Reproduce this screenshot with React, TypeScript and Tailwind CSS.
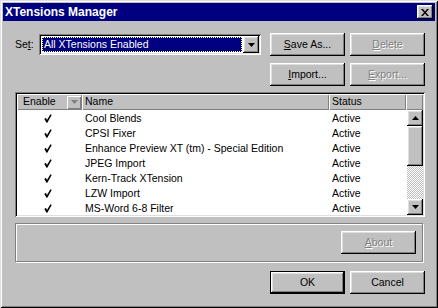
import React from "react";

const raised =
  "shadow-[inset_-1px_-1px_#000,inset_1px_1px_#fff,inset_-2px_-2px_#808080,inset_2px_2px_#dfdfdf]";
const flat = "shadow-[inset_1px_1px_#fff,inset_-1px_-1px_#808080]";
const sunken =
  "shadow-[inset_1px_1px_#808080,inset_-1px_-1px_#fff,inset_2px_2px_#000,inset_-2px_-2px_#dfdfdf]";
const disabledText = "text-[#808080] [text-shadow:1px_1px_0_#fff]";

const rows = [
  "Cool Blends",
  "CPSI Fixer",
  "Enhance Preview XT (tm) - Special Edition",
  "JPEG Import",
  "Kern-Track XTension",
  "LZW Import",
  "MS-Word 6-8 Filter",
];

function Btn({
  children,
  disabled,
  isDefault,
  className = "",
}: {
  children: React.ReactNode;
  disabled?: boolean;
  isDefault?: boolean;
  className?: string;
}) {
  // default button gets the extra black frame
  if (isDefault) {
    return (
      <div className={`w-[75px] h-[23px] border border-black ${className}`}>
        <div
          className={`w-full h-full flex items-center justify-center bg-[#c0c0c0] ${raised}`}
        >
          {children}
        </div>
      </div>
    );
  }
  return (
    <div
      className={`w-[75px] h-[23px] flex items-center justify-center bg-[#c0c0c0] ${raised} ${
        disabled ? disabledText : "text-black"
      } ${className}`}
    >
      {children}
    </div>
  );
}

function Arrow({ up, gray }: { up?: boolean; gray?: boolean }) {
  return (
    <svg width="7" height="4" viewBox="0 0 7 4">
      <path
        d={up ? "M3.5 0 L7 4 L0 4 Z" : "M0 0 L7 0 L3.5 4 Z"}
        fill={gray ? "#808080" : "#000"}
      />
    </svg>
  );
}

function Check() {
  return (
    <svg width="8" height="9" viewBox="0 0 8 9">
      <path
        d="M0.3 5 L1.9 3.8 L3 6 L6.4 0.3 L7.7 1 L3.3 8.7 L2.5 8.7 Z"
        fill="#000"
      />
    </svg>
  );
}

export default function App() {
  return (
    <div
      className="w-[438px] h-[308px] bg-[#c0c0c0] p-[3px] flex flex-col shadow-[inset_1px_1px_#dfdfdf,inset_-1px_-1px_#000,inset_2px_2px_#fff,inset_-2px_-2px_#808080] text-[10.5px] text-black"
      style={{ fontFamily: '"Liberation Sans", Arial, sans-serif' }}
    >
      {/* title bar */}
      <div className="h-[18px] bg-[#000080] flex items-center justify-between pl-[2px] pr-[2px]">
        <span className="text-white font-bold text-[12px] leading-none">
          XTensions Manager
        </span>
        <div
          className={`w-[16px] h-[14px] bg-[#c0c0c0] flex items-center justify-center ${raised}`}
        >
          <svg width="8" height="7" viewBox="0 0 8 7">
            <path
              d="M0 0 L2 0 L4 2.5 L6 0 L8 0 L5 3.5 L8 7 L6 7 L4 4.5 L2 7 L0 7 L3 3.5 Z"
              fill="#000"
            />
          </svg>
        </div>
      </div>

      {/* body */}
      <div className="flex-1 flex flex-col pl-[12px] pr-[10px] pt-[12px]">
        <div className="flex items-start">
          <div className="flex items-center h-[21px] mt-[1px]">
            <span className="w-[24px]">
              Se<span className="underline">t</span>:
            </span>
            <div
              className={`w-[222px] h-[21px] bg-white p-[2px] flex ${sunken}`}
            >
              <div className="flex-1 p-[1px]">
                <div className="h-full bg-[#000080] text-white border border-dotted border-[#ffff99] flex items-center pl-[1px]">
                  All XTensions Enabled
                </div>
              </div>
              <div
                className={`w-[16px] h-[17px] bg-[#c0c0c0] flex items-center justify-center ${raised}`}
              >
                <Arrow />
              </div>
            </div>
          </div>
          <div className="ml-[9px] flex flex-col gap-[7px]">
            <div className="flex gap-[5px]">
              <Btn>
                <span className="underline">S</span>ave As...
              </Btn>
              <Btn disabled>
                <span className="underline">D</span>elete
              </Btn>
            </div>
            <div className="flex gap-[5px]">
              <Btn>
                <span className="underline">I</span>mport...
              </Btn>
              <Btn disabled>
                <span className="underline">E</span>xport...
              </Btn>
            </div>
          </div>
        </div>

        {/* list */}
        <div
          className={`mt-[6px] h-[125px] bg-white p-[2px] flex flex-col ${sunken}`}
        >
          <div className="h-[16px] flex bg-[#c0c0c0]">
            <div
              className={`w-[65px] flex items-center justify-between pl-[6px] pr-[1px] ${flat}`}
            >
              <span>Enable</span>
              <div
                className={`w-[14px] h-[13px] flex items-center justify-center ${flat}`}
              >
                <Arrow gray />
              </div>
            </div>
            <div className={`w-[247px] flex items-center pl-[3px] ${flat}`}>
              Name
            </div>
            <div className={`w-[77px] flex items-center pl-[3px] ${flat}`}>
              Status
            </div>
            <div className={`flex-1 ${flat}`} />
          </div>
          <div className="flex-1 flex min-h-0">
            <div className="flex-1 pt-[1px]">
              {rows.map((r) => (
                <div key={r} className="h-[15px] flex items-center">
                  <div className="w-[65px] flex justify-center pr-[3px]">
                    <Check />
                  </div>
                  <div className="w-[247px] pl-[3px] whitespace-nowrap">
                    {r}
                  </div>
                  <div className="pl-[3px]">Active</div>
                </div>
              ))}
            </div>
            {/* scrollbar */}
            <div className="w-[16px] flex flex-col bg-[repeating-conic-gradient(#fff_0_25%,#c0c0c0_0_50%)] bg-[length:2px_2px]">
              <div
                className={`h-[16px] bg-[#c0c0c0] flex items-center justify-center ${raised}`}
              >
                <Arrow up />
              </div>
              <div className={`h-[40px] bg-[#c0c0c0] ${raised}`} />
              <div className="flex-1" />
              <div
                className={`h-[16px] bg-[#c0c0c0] flex items-center justify-center ${raised}`}
              >
                <Arrow />
              </div>
            </div>
          </div>
        </div>

        {/* group box */}
        <div className="mt-[6px] mr-[2px] h-[39px] border border-[#808080] shadow-[1px_1px_#fff,inset_1px_1px_#fff] flex items-center justify-end pr-[6px]">
          <Btn disabled>
            <span className="underline">A</span>bout
          </Btn>
        </div>

        <div className="mt-[9px] flex justify-end gap-[5px]">
          <Btn isDefault>OK</Btn>
          <Btn>Cancel</Btn>
        </div>
      </div>
    </div>
  );
}
